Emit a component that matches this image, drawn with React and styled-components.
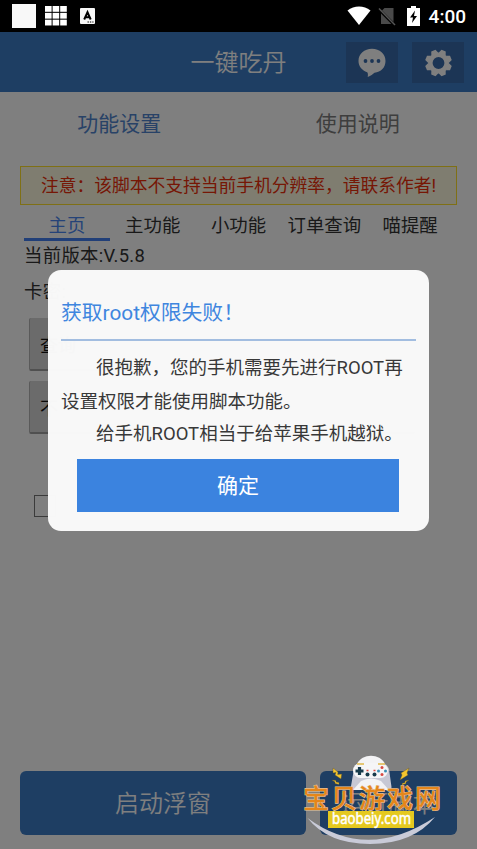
import styled, { createGlobalStyle } from 'styled-components';
import { useState } from 'react';

const GlobalStyle = createGlobalStyle`
  * {
    box-sizing: border-box;
  }

  body {
    margin: 0;
    background: #fff;
    font-family: Roboto, "Noto Sans CJK SC", sans-serif;
  }

  button {
    font-family: inherit;
    border: none;
    padding: 0;
  }
`;

const Screen = styled.div`
  position: relative;
  display: flex;
  flex-direction: column;
  width: 477px;
  height: 849px;
  overflow: hidden;
`;

const StatusBar = styled.div`
  display: flex;
  align-items: center;
  height: 32px;
  padding: 0 11px 0 12px;
  background: #000;
  color: #fff;
`;

const StatusGroup = styled.div`
  display: flex;
  align-items: center;
  margin-left: ${(props) => (props.$right ? 'auto' : '0')};

  svg + svg {
    margin-left: ${(props) => (props.$right ? '7px' : '9px')};
  }

  svg + svg + svg {
    margin-left: ${(props) => (props.$right ? '11px' : '13px')};
  }
`;

const Clock = styled.span`
  margin-left: 9px;
  font-size: 19px;
  line-height: 33px;
  font-weight: 500;
`;

const Header = styled.header`
  display: grid;
  grid-template-columns: 131.5px 1fr 131.5px;
  align-items: center;
  height: 60px;
  background: #3d7dc7;
  color: #fff;
`;

const Title = styled.h1`
  grid-column: 2;
  margin: 0;
  text-align: center;
  font-size: 24px;
  line-height: 62px;
  font-weight: 350;
`;

const HeaderButtons = styled.div`
  display: flex;
  gap: 14px;
  margin-bottom: 1px;
`;

const IconButton = styled.button`
  display: flex;
  align-items: center;
  justify-content: center;
  width: 52px;
  height: 41px;
  background: #386aaa;
  color: #fff;
`;

const Tabs = styled.nav`
  display: flex;
  height: 62px;
`;

const Tab = styled.a`
  flex: 1;
  text-align: center;
  font-size: 21px;
  line-height: 64px;
  color: ${(props) => (props.$active ? '#5185ce' : '#7c7c7c')};
`;

const Notice = styled.div`
  height: 39px;
  margin: 12px 20px 0;
  padding-left: 20px;
  border: 1px solid #ffe02a;
  background: #fffbe0;
  color: #ec2e0a;
  font-size: 17.75px;
  line-height: 39px;
  white-space: nowrap;
`;

const SubTabs = styled.nav`
  display: flex;
  height: 36px;
  margin: 0 24px;
`;

const SubTab = styled.a`
  flex: 1;
  text-align: center;
  white-space: nowrap;
  font-size: 18.4px;
  line-height: 41px;
  color: ${(props) => (props.$active ? '#4a86f0' : '#333')};
  border-bottom: ${(props) => (props.$active ? '3px solid #427ff0' : 'none')};
`;

const Panel = styled.section`
  display: flex;
  flex-direction: column;
  padding: 0 24px;
  color: #333;
  font-size: 18.4px;
`;

const Line = styled.div`
  height: ${(props) => props.$height}px;
  line-height: 30px;
  letter-spacing: 0.3px;
`;

const CardLine = styled(Line)`
  padding-top: 6px;
`;

const GreyButton = styled.button`
  width: ${(props) => props.$width}px;
  height: 53px;
  margin: 0 0 10px 5px;
  padding-left: 10px;
  text-align: left;
  background: #d6d6d6;
  border-bottom: 2px solid #a0a0a0;
  border-left: 1px solid #b4b4b4;
  border-radius: 2px;
  color: #111;
  font-size: 18px;
  font-weight: 400;
`;

const CheckBox = styled.span`
  width: 22px;
  height: 22px;
  margin: 51px 0 0 10px;
  border: 1px solid #777;
`;

const Footer = styled.footer`
  display: flex;
  gap: 14px;
  margin-top: auto;
  padding: 0 20px 14px;
`;

const FooterButton = styled.button`
  flex: ${(props) => props.$grow};
  height: 64px;
  padding-bottom: 3px;
  border-radius: 6px;
  background: #3d7dc7;
  color: #fff;
  font-size: 24px;
  font-weight: 350;
`;

const Overlay = styled.div`
  position: absolute;
  inset: 32px 0 0;
  display: flex;
  align-items: flex-start;
  justify-content: center;
  padding: 238.4px 0 0;
  background: rgba(0, 0, 0, 0.5);
`;

const Dialog = styled.div`
  display: flex;
  flex-direction: column;
  width: 381px;
  height: 261px;
  padding: 17px 13px 20px;
  border-radius: 13px;
  background: rgba(250, 250, 250, 0.985);
`;

const DialogTitle = styled.h2`
  height: 54px;
  margin: 0;
  border-bottom: 2px solid #a2bde0;
  color: #3f86df;
  font-size: 20.8px;
  line-height: 53px;
  font-weight: 400;
`;

const DialogText = styled.p`
  height: ${(props) => props.$height}px;
  margin: 0;
  padding-left: ${(props) => (props.$indent ? '35px' : '0')};
  color: #383838;
  font-size: 18.5px;
  line-height: ${(props) => props.$height + 1}px;
  white-space: nowrap;
`;

const ConfirmButton = styled.button`
  height: 53px;
  margin: auto 17px 0 16px;
  background: #3b83df;
  color: #fff;
  font-size: 21px;
  line-height: 55px;
`;

const Watermark = styled.svg`
  position: absolute;
  left: 300px;
  top: 750px;
`;

const subTabs = ['主页', '主功能', '小功能', '订单查询', '喵提醒'];

function GridIcon() {
  const cells = [0, 7.6, 15.2];
  return (
    <svg width="22" height="20" viewBox="0 0 22 20" fill="#fff">
      {cells.map((x) =>
        cells.map((y) => <rect key={`${x}-${y}`} x={x} y={y * 0.9} width="6.6" height="5.8" />)
      )}
    </svg>
  );
}

function InputIcon() {
  return (
    <svg width="15" height="16" viewBox="0 0 15 16">
      <rect width="15" height="16" rx="1" fill="#f8f8f8" />
      <path d="M4.2 11.5 7.5 4.3l3.2 7.2M5.5 9.2h4" fill="none" stroke="#000" strokeWidth="2" />
      <path d="M7.5 14h6" stroke="#000" strokeDasharray="1.4 1" />
    </svg>
  );
}

function WifiIcon() {
  return (
    <svg width="24" height="20" viewBox="0 0 24 20" fill="#fff">
      <path d="M.5 4.5C7-.7 17-.7 23.5 4.5L12 19z" />
    </svg>
  );
}

function NoSimIcon() {
  return (
    <svg width="18" height="19" viewBox="0 0 18 19">
      <path d="M6.5 1H15.5V17H3V4.5z" fill="#4a4a4a" />
      <path d="M0 1.5 16.5 18" stroke="#000" strokeWidth="3" />
      <path d="M1 1.5 17 18" stroke="#555" strokeWidth="1.5" />
    </svg>
  );
}

function BatteryIcon() {
  return (
    <svg width="13" height="20" viewBox="0 0 13 20">
      <path d="M4 0h5v2h4v18H0V2h4z" fill="#fff" />
      <path d="M8 4.5 3 11.5h3L5 17l5-7H7z" fill="#000" />
    </svg>
  );
}

function ChatIcon() {
  return (
    <svg width="28" height="30" viewBox="0 0 28 30">
      <path
        d="M14 .8C6.3.8.5 5.8.5 13c0 5.4 3.6 9.3 8.7 11.2.8 1 .9 2.6.5 4.8 3.2-1.2 5.2-2.7 6.8-4.2C23 24 27.5 19.5 27.5 13 27.5 5.8 21.7.8 14 .8z"
        fill="#fff"
      />
      <circle cx="7.5" cy="13" r="1.9" fill="#386aaa" />
      <circle cx="14" cy="13" r="1.9" fill="#386aaa" />
      <circle cx="20.5" cy="13" r="1.9" fill="#386aaa" />
    </svg>
  );
}

function GearIcon() {
  const teeth = [22.5, 67.5, 112.5, 157.5, 202.5, 247.5, 292.5, 337.5];
  return (
    <svg width="28" height="28" viewBox="-14.5 -14 28 28">
      <circle r="8.2" fill="none" stroke="#fff" strokeWidth="4.6" />
      {teeth.map((angle) => (
        <path key={angle} d="M-3.8-9.5-2.3-13.4H2.3L3.8-9.5z" fill="#fff" transform={`rotate(${angle})`} />
      ))}
    </svg>
  );
}

function SiteMark() {
  return (
    <Watermark width="146" height="98" viewBox="0 0 146 98">
      {/* 手柄 */}
      <path d="M56 17C59 2 83 2 86 17z" fill="#f3f3f5" />
      <path d="M54 19q2-6 9-5h16q8-1 10 5l2.5 18q0 6-6 3L79 31H63l-6 8q-6 3-6-3z" fill="#c7c8d4" />
      <rect x="53" y="13" width="35" height="15" rx="7.5" fill="#f5f5f7" />
      <path d="M61 31q10-5 20 0l8 9H53z" fill="#f3f3f5" />
      <path d="M57 14h7M78 14h7" stroke="#dfb84a" strokeWidth="1.5" />
      <path d="M59.5 17v8M55.5 21h8" stroke="#173a4b" strokeWidth="3.2" />
      <circle cx="82" cy="17.5" r="1.5" fill="#d94a42" />
      <circle cx="82" cy="24.5" r="1.5" fill="#d94a42" />
      <circle cx="78.5" cy="21" r="1.5" fill="#3a8fb5" />
      <circle cx="85.5" cy="21" r="1.5" fill="#3a8fb5" />
      <circle cx="67.5" cy="24.5" r="2" fill="#173a4b" />
      <circle cx="74.5" cy="24.5" r="2" fill="#173a4b" />
      <path d="M66.5 20.5h2M73.5 20.5h2" stroke="#d94a42" strokeWidth="1.5" />
      {/* 闪电 */}
      <g fill="#f4c62e" stroke="#5f5228" strokeWidth=".4">
        <path d="m33 18 5 4-.3 2.5 4-.5-.7 5-6-4 1-2.5-3 .5z" />
        <path d="m32 30 4 .5V32l3 .5v2l-4-1V32z" />
        <path d="m109 18-8 5 1 2-2 5 8-5-1-2z" />
        <path d="m109 30-4 1v1.5l-3 1V35l4-1.5V32z" />
      </g>
      <path d="M7.5 68Q67 112 135 67Q113 94 70 94Q28 94 7.5 68z" fill="#c9cbd8" />
      <text
        x="3"
        y="57.5"
        fontFamily='"Noto Sans CJK SC", sans-serif'
        fontSize="26"
        fontWeight="500"
        letterSpacing="2"
        fill="#e5861a"
        stroke="#e8c79c"
        strokeWidth="1.1"
        paintOrder="stroke"
      >
        宝贝游戏网
      </text>
      <rect x="28" y="61" width="86" height="17" fill="#e5c91f" />
      <text
        x="32"
        y="74"
        textLength="79"
        lengthAdjust="spacingAndGlyphs"
        fontFamily='"Noto Sans", sans-serif'
        fontSize="15.5"
        fontWeight="400"
        fill="#fff"
        stroke="#fff"
        strokeWidth=".5"
      >
        baobeiy.com
      </text>
    </Watermark>
  );
}

function App() {
  const [open, setOpen] = useState(true);

  return (
    <>
      <GlobalStyle />
      <Screen>
        <StatusBar>
          <StatusGroup>
            <svg width="24" height="24"><rect width="24" height="24" fill="#f8f8f8" /></svg>
            <GridIcon />
            <InputIcon />
          </StatusGroup>
          <StatusGroup $right>
            <WifiIcon />
            <NoSimIcon />
            <BatteryIcon />
            <Clock>4:00</Clock>
          </StatusGroup>
        </StatusBar>

        <Header>
          <Title>一键吃丹</Title>
          <HeaderButtons>
            <IconButton><ChatIcon /></IconButton>
            <IconButton><GearIcon /></IconButton>
          </HeaderButtons>
        </Header>

        <Tabs>
          <Tab $active>功能设置</Tab>
          <Tab>使用说明</Tab>
        </Tabs>

        <Notice>注意：该脚本不支持当前手机分辨率，请联系作者!</Notice>

        <SubTabs>
          {subTabs.map((name, i) => (
            <SubTab key={name} $active={i === 0}>{name}</SubTab>
          ))}
        </SubTabs>

        <Panel>
          <Line $height={30}>当前版本:V.5.8</Line>
          <CardLine $height={47}>卡密:</CardLine>
          <GreyButton $width={95}>查询</GreyButton>
          <GreyButton $width={386}>不</GreyButton>
          <CheckBox />
        </Panel>

        <Footer>
          <FooterButton $grow="0 0 286px">启动浮窗</FooterButton>
          <FooterButton $grow="1">运行脚本</FooterButton>
        </Footer>

        {open && (
          <Overlay>
            <Dialog>
              <DialogTitle>获取root权限失败！</DialogTitle>
              <DialogText $indent $height={54}>很抱歉，您的手机需要先进行ROOT再</DialogText>
              <DialogText $height={14}>设置权限才能使用脚本功能。</DialogText>
              <DialogText $indent $height={50}>给手机ROOT相当于给苹果手机越狱。</DialogText>
              <ConfirmButton onClick={() => setOpen(false)}>确定</ConfirmButton>
            </Dialog>
          </Overlay>
        )}
        <SiteMark />
      </Screen>
    </>
  );
}

export default App;
